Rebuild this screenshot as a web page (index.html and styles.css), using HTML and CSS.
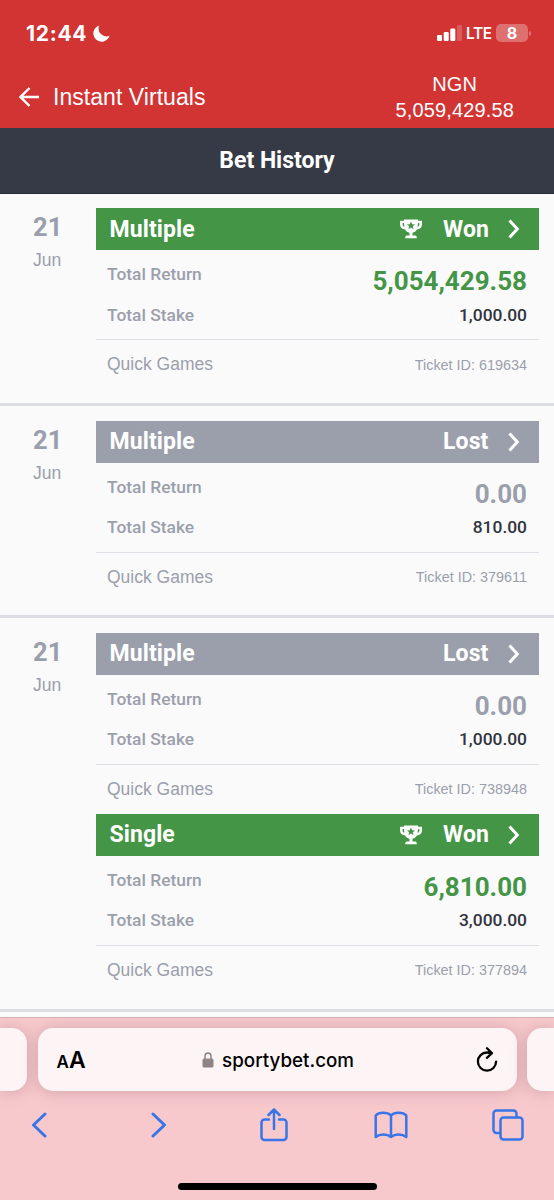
FILE: index.html
```
<!DOCTYPE html>
<html lang="en">
<head>
<meta charset="utf-8">
<title>Bet History</title>
<link rel="stylesheet" href="styles.css">
</head>
<body>
<svg class="defs" width="0" height="0">
  <symbol id="trophy" viewBox="0 0 22 20">
    <path d="M4 .5h14v1.300h4v3.700c0 3-2 4.800-5.200 5-.9 1.800-2.400 2.900-4.300 3.200v2.800h2.800c1 0 1.500.8 1.500 2.800H5.200c0-2 .5-2.800 1.500-2.800h2.800v-2.800c-1.900-.3-3.400-1.400-4.300-3.200C2 10.300 0 8.500 0 5.500V1.800h4zM2.600 4v1.500c0 1.300.5 2 1.800 2.300L4 4zM18 4l-.4 3.800c1.300-.3 1.800-1 1.800-2.300V4zM11 2.300l-1.100 2.900-3 .2 2.300 1.900-.8 2.900 2.600-1.600 2.600 1.600-.8-2.900 2.300-1.900-3-.2z" fill="#fff" fill-rule="evenodd"/>
  </symbol>
  <symbol id="chevron" viewBox="0 0 12 20">
    <path d="M1.500 1.500 9.300 10 1.500 18.500" fill="none" stroke="#fff" stroke-width="3"/>
  </symbol>
</svg>
<header class="header">
  <div class="status">
    <span class="time">12:44</span>
    <svg class="moon" width="17" height="17" viewBox="0 0 17 17"><path d="M6.200.4A8.300 8.300 0 1 0 16.600 10.800 8 8 0 0 1 6.200.4z" fill="#fff"/></svg>
    <div class="indicators">
      <svg width="25" height="16" viewBox="0 0 25 16"><g fill="#fff"><rect x="0" y="10" width="5" height="6" rx="1.200"/><rect x="6.700" y="7" width="5" height="9" rx="1.200"/><rect x="13.300" y="3.500" width="5" height="12.500" rx="1.200"/><rect x="20" y="0" width="5" height="16" rx="1.200" opacity=".2"/></g></svg>
      <span class="lte">LTE</span>
      <span class="battery">8</span><span class="tip"></span>
    </div>
  </div>
  <div class="nav">
    <svg class="back" width="20" height="20" viewBox="0 0 20 20"><path d="M10.500 1 1.500 10l9 9M2 10h18" fill="none" stroke="#fff" stroke-width="2.400"/></svg>
    <span class="nav-title">Instant Virtuals</span>
    <div class="balance"><div class="currency">NGN</div><div>5,059,429.58</div></div>
  </div>
</header>
<h1 class="title">Bet History</h1>
<main class="list">
  <section class="entry">
    <div class="date"><div class="day">21</div><div class="month">Jun</div></div>
    <div class="tickets">
      <article class="ticket won">
        <div class="banner"><span class="kind">Multiple</span><svg class="cup"><use href="#trophy"/></svg><span class="result">Won</span><svg class="chev"><use href="#chevron"/></svg></div>
        <div class="row first"><span>Total Return</span><strong class="return">5,054,429.58</strong></div>
        <div class="row"><span>Total Stake</span><span class="stake">1,000.00</span></div>
        <div class="foot"><span class="game">Quick Games</span><span class="id">Ticket ID: 619634</span></div>
      </article>
    </div>
  </section>
  <section class="entry">
    <div class="date"><div class="day">21</div><div class="month">Jun</div></div>
    <div class="tickets">
      <article class="ticket lost">
        <div class="banner"><span class="kind">Multiple</span><span class="result">Lost</span><svg class="chev"><use href="#chevron"/></svg></div>
        <div class="row first"><span>Total Return</span><strong class="return">0.00</strong></div>
        <div class="row"><span>Total Stake</span><span class="stake">810.00</span></div>
        <div class="foot"><span class="game">Quick Games</span><span class="id">Ticket ID: 379611</span></div>
      </article>
    </div>
  </section>
  <section class="entry">
    <div class="date"><div class="day">21</div><div class="month">Jun</div></div>
    <div class="tickets">
      <article class="ticket lost">
        <div class="banner"><span class="kind">Multiple</span><span class="result">Lost</span><svg class="chev"><use href="#chevron"/></svg></div>
        <div class="row first"><span>Total Return</span><strong class="return">0.00</strong></div>
        <div class="row"><span>Total Stake</span><span class="stake">1,000.00</span></div>
        <div class="foot"><span class="game">Quick Games</span><span class="id">Ticket ID: 738948</span></div>
      </article>
      <article class="ticket won">
        <div class="banner"><span class="kind">Single</span><svg class="cup"><use href="#trophy"/></svg><span class="result">Won</span><svg class="chev"><use href="#chevron"/></svg></div>
        <div class="row first"><span>Total Return</span><strong class="return">6,810.00</strong></div>
        <div class="row"><span>Total Stake</span><span class="stake">3,000.00</span></div>
        <div class="foot"><span class="game">Quick Games</span><span class="id">Ticket ID: 377894</span></div>
      </article>
    </div>
  </section>
</main>
<footer class="browser">
  <div class="tabs">
    <div class="tab"></div>
    <div class="tab address">
      <span class="aa"><span class="small-a">A</span>A</span>
      <span class="site"><svg width="12" height="16" viewBox="0 0 12 16"><rect x=".5" y="6.500" width="11" height="9" rx="1.500" fill="#8c8487"/><path d="M3 7V4.200a3 3.300 0 0 1 6 0V7" fill="none" stroke="#8c8487" stroke-width="1.500"/></svg><span>sportybet.com</span></span>
      <svg class="reload" width="22" height="26" viewBox="0 0 22 26"><path d="M15.500 6.100C14.200 5.800 13 5.500 11 5.500a9.100 9.100 0 1 0 9.100 9.100M11 1.300l4.900 4.800-5 4.700" fill="none" stroke="#000" stroke-width="2.300" stroke-linecap="round" stroke-linejoin="round"/></svg>
    </div>
    <div class="tab"></div>
  </div>
  <div class="tools">
    <svg width="16" height="26" viewBox="0 0 16 26"><path d="M14 2 2.500 13 14 24"/></svg>
    <svg class="forward" width="16" height="26" viewBox="0 0 16 26"><path d="M2 2l11.500 11L2 24"/></svg>
    <svg class="thin" width="28" height="34" viewBox="0 0 28 34"><path d="M9 11.500H4.500a3 3 0 0 0-3 3V29a3 3 0 0 0 3 3h19a3 3 0 0 0 3-3V14.500a3 3 0 0 0-3-3H19M14 21V1.500M8.500 7 14 1.500 19.500 7"/></svg>
    <svg class="thin" width="34" height="28" viewBox="0 0 34 28"><path d="M17 4.500C13.500.8 5 .8 1.700 4.500V26c4-3.200 11.500-3.200 15.300 0 3.800-3.200 11.300-3.200 15.300 0V4.500C29 .8 20.500.8 17 4.500zM17 4.500V26"/></svg>
    <svg class="thin" width="32" height="32" viewBox="0 0 32 32"><path d="M8 24H4.500a3 3 0 0 1-3-3V4.500a3 3 0 0 1 3-3h17a3 3 0 0 1 3 3V8"/><rect x="8.500" y="8.500" width="22" height="22" rx="3"/></svg>
  </div>
  <div class="home"></div>
</footer>
</body>
</html>
```
FILE: styles.css
```
* { box-sizing: border-box; }
body { margin: 0; width: 554px; height: 1200px; overflow: hidden; background: #fafafb; font-family: "Liberation Sans", Arial, sans-serif; color: #9b9fab; display: flex; flex-direction: column; }
svg { display: block; flex: none; }
.defs { position: absolute; }
.header { height: 128px; flex: none; background: #d13433; color: #fff; }
.status { display: flex; align-items: center; height: 66px; padding: 0 24px 0 26px; font-family: Inter, sans-serif; font-weight: 700; }
.time { width: 67px; font-size: 21px; letter-spacing: .7px; }
.indicators { margin-left: auto; display: flex; align-items: center; }
.indicators svg { margin-right: 4px; }
.lte { font-size: 15.300px; font-weight: 600; width: 30px; letter-spacing: -.3px; }
.battery { width: 32px; height: 18px; border-radius: 5px; background: #df7070; font-size: 16px; line-height: 18px; text-align: center; }
.tip { width: 2px; height: 5px; margin-left: 1px; margin-right: -1px; background: #df7070; border-radius: 0 2px 2px 0; }
.nav { display: flex; align-items: center; height: 62px; padding: 0 40px 0 19px; }
.nav-title { margin-left: 14px; font-size: 23px; letter-spacing: .05px; }
.balance { margin-left: auto; text-align: center; font-size: 20px; line-height: 26px; letter-spacing: .15px; }
.title { margin: 0; height: 65.500px; flex: none; background: #363a46; border-bottom: 1px solid #282a34; color: #fff; font: 700 23px/65px Roboto, sans-serif; text-align: center; }
.list { flex: none; height: 823.500px; }
.entry { display: flex; padding: 14.700px 15px 13.700px 0; border-bottom: 3px solid #dddee3; }
.date { width: 95.500px; flex: none; padding-left: 33px; }
.day { font: 700 25.500px/39px Roboto, sans-serif; }
.month { width: 30px; font-size: 17.500px; line-height: 27px; }
.tickets { flex: 1; }
.ticket { height: 181px; }
.banner { height: 42px; padding: 0 19px 0 14px; display: flex; align-items: center; color: #fff; font: 700 23px/41px Roboto, sans-serif; }
.won .banner { background: #449545; }
.lost .banner { background: #9b9fab; }
.kind { margin-right: auto; letter-spacing: .1px; }
.cup { width: 22px; height: 20px; margin-right: 21px; }
.result { width: 65px; letter-spacing: .1px; }
.chev { width: 12px; height: 20px; }
.row { height: 40px; padding: 0 12px; display: flex; justify-content: space-between; align-items: center; font: 500 17.400px/40px Roboto, sans-serif; }
.row > span:first-child { margin-left: -.5px; }
.first { height: 44.500px; padding-top: 4px; }
.row .return { font-size: 26px; padding-top: 14px; font-weight: 700; }
.won .return { color: #449545; }
.stake { color: #30333d; }
.foot { height: 50px; margin-top: 4.500px; padding: 0 12px 0 11.500px; border-top: 1.500px solid #dddfe4; display: flex; justify-content: space-between; align-items: center; }
.game { font-size: 17.500px; }
.id { font-size: 14.400px; }
.browser { height: 183px; flex: none; background: #f7c9cd; border-top: 1px solid #d7aeb3; overflow: hidden; }
.tabs { height: 74px; padding-top: 10px; display: grid; grid-template-columns: 27px 479px 27px; column-gap: 10.500px; }
.tab { height: 63px; background: #fdf4f5; box-shadow: 0 1px 16px rgba(110, 50, 60, .25); border-radius: 0 15px 15px 0; }
.tab:last-child { border-radius: 15px 0 0 15px; }
.address { display: flex; align-items: center; justify-content: space-between; border-radius: 15px; padding: 0 18px 0 19px; color: #000; font-family: Inter, sans-serif; }
.aa { font-size: 23px; font-weight: 600; }
.small-a { font-size: 17px; }
.site { display: flex; align-items: center; gap: 8px; font-size: 18.800px; font-weight: 500; padding: 1px 6px 0 0; }
.tools { display: grid; grid-template-columns: repeat(5, 117.300px); place-items: center; height: 66px; margin-left: -19.500px; }
.tools svg { fill: none; stroke: #3975e8; stroke-width: 3; stroke-linecap: round; stroke-linejoin: round; }
.tools .forward { margin-left: 5px; }
.tools .thin { stroke-width: 2.500; }
.home { width: 199px; height: 7px; margin: 25px auto 0 178px; background: #000; border-radius: 4px; }
```
